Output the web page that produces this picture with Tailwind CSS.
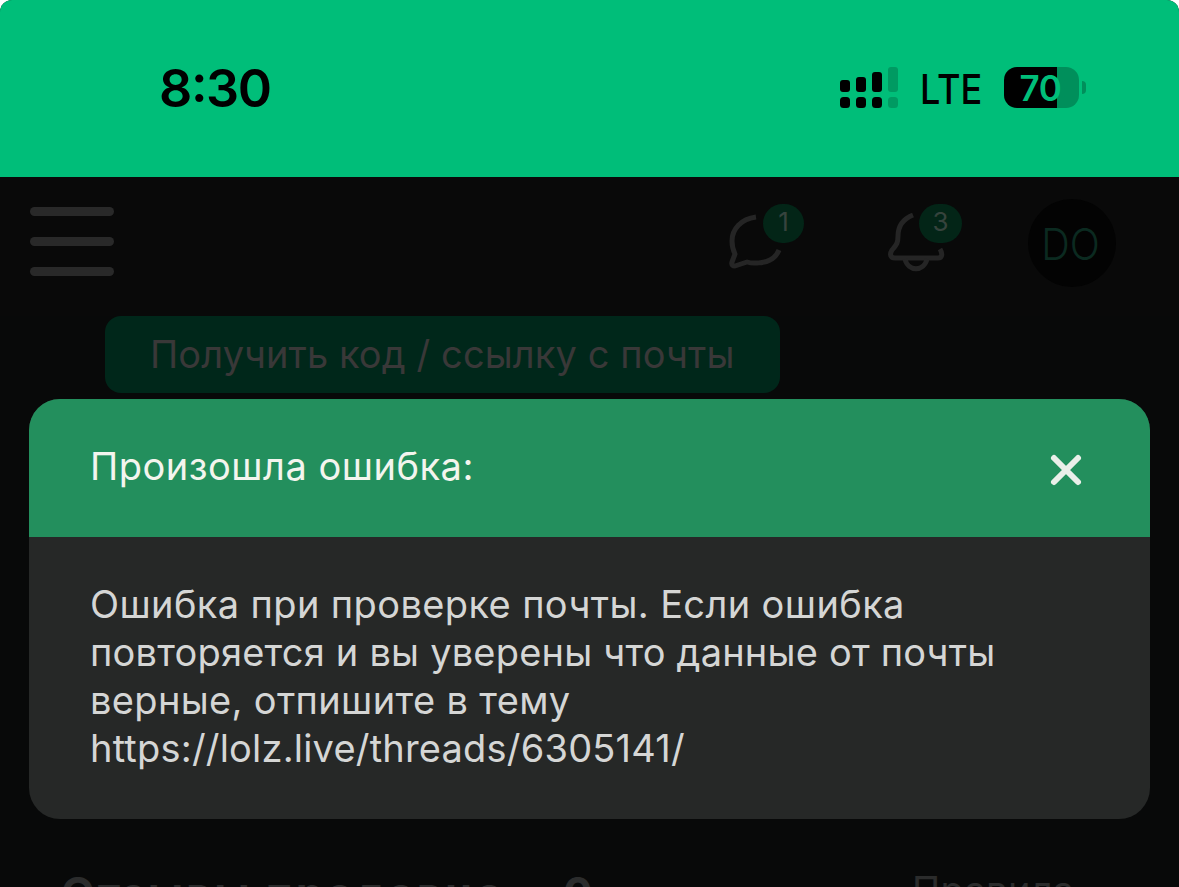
<!DOCTYPE html>
<html lang="ru">
<head>
  <meta charset="UTF-8" />
  <meta name="viewport" content="width=device-width, initial-scale=1.0" />
  <title>Произошла ошибка</title>
  <script src="https://cdn.jsdelivr.net/npm/@tailwindcss/browser@4"></script>
</head>
<body class="bg-white font-['Inter','Noto_Sans',sans-serif]">
  <div class="relative flex h-[887px] w-[1179px] flex-col overflow-hidden rounded-t-[12px] bg-[#080909]">

    <!-- Status bar -->
    <div class="flex h-[177px] shrink-0 items-start justify-between bg-[#00be79] pt-[67px] pr-[93px] pl-[159px] text-black">
      <div class="h-[42px] text-[52px] leading-[44px] font-semibold tracking-[-1.4px] whitespace-nowrap">8<span class="inline-block -translate-y-[5px]">:</span>30</div>
      <div class="flex h-[41px]">
        <svg class="h-[41px] w-[58px] shrink-0" viewBox="0 0 58 41">
          <rect x="0" y="13" width="10" height="12" rx="3" />
          <rect x="16" y="10" width="10" height="15" rx="3" />
          <rect x="32" y="5" width="10" height="20" rx="3" />
          <rect x="48" y="0" width="10" height="25" rx="3" fill="#009a62" />
          <rect x="0" y="30" width="10" height="11" rx="3.5" />
          <rect x="16" y="30" width="10" height="11" rx="3.5" />
          <rect x="32" y="30" width="10" height="11" rx="3.5" />
          <rect x="48" y="30" width="10" height="11" rx="3.5" fill="#009a62" />
        </svg>
        <div class="ml-[22px] w-[84px] text-[41px] leading-[44px] font-medium whitespace-nowrap"><span class="inline-block origin-left scale-x-[0.88]">LTE</span></div>
        <div class="flex h-[41px] w-[75px] shrink-0 items-center justify-center overflow-hidden rounded-[13px] bg-linear-to-r from-black from-[53px] to-[#008f5b] to-[53px] pr-[2px]">
          <span class="pt-px text-[35px] leading-none font-semibold tracking-[-0.3px] text-[#00be79]">70</span>
        </div>
        <div class="mt-[14px] ml-[3px] h-[13px] w-[4px] rounded-r-full bg-[#008f5b]"></div>
      </div>
    </div>

    <!-- Site header -->
    <div class="flex h-[139px] shrink-0 items-start justify-between bg-[#090909] pr-[63px] pl-[30px]">
      <div class="mt-[30px] flex w-[84px] flex-col gap-[21px]">
        <div class="h-[9px] rounded-full bg-[#292929]"></div>
        <div class="h-[9px] rounded-full bg-[#292929]"></div>
        <div class="h-[9px] rounded-full bg-[#292929]"></div>
      </div>
      <div class="flex pt-[23px]">
        <div class="relative w-[158px]">
          <svg class="h-[80px] w-[80px]" viewBox="0 0 80 80" fill="none" stroke="#252525" stroke-width="5" stroke-linejoin="round">
            <path d="M27 17C12 19 3 29 3 41c0 5 1 9 3 13L3 62c-1 3 1 4 3 4l12-4c6 2 18 1 23-2 4-2 7-5 9-10" />
          </svg>
          <div class="absolute top-[4px] left-[34px] h-[39px] w-[41px] rounded-full bg-[#032517] pt-[4px] text-center text-[26px] leading-[28px] text-[#36433d]">1</div>
        </div>
        <div class="relative w-[141px]">
          <svg class="h-[80px] w-[80px]" viewBox="0 0 80 80" fill="none" stroke="#252525" stroke-width="5" stroke-linejoin="round">
            <path d="M26 15c-10 4-15 11-15 21 0 8-2 9-6 14-3 5-1 8 3 8h43c4 0 5-4 2-9" />
            <path d="M18 59c3 13 19 13 22 0" />
          </svg>
          <div class="absolute top-[4px] left-[32px] h-[39px] w-[43px] rounded-full bg-[#032517] pt-[4px] text-center text-[26px] leading-[28px] text-[#36433d]">3</div>
        </div>
        <div class="mt-[-1px] flex h-[88px] w-[88px] items-center justify-center rounded-full bg-[#030303] pt-px pr-[2px] text-[44px] font-light text-[#0b2a20]"><span class="inline-block scale-x-[0.9]">DO</span></div>
      </div>
    </div>

    <!-- Mail code button -->
    <div class="ml-[105px] h-[77px] w-[675px] shrink-0 rounded-[16px] bg-[#00271a] pl-[45px] text-[38px] leading-[76px] tracking-[0.1px] whitespace-nowrap text-[#393838]">Получить код / ссылку с почты</div>

    <!-- Seller reviews -->
    <div class="mt-auto flex h-[12px] shrink-0 pl-[61px] leading-[48px] whitespace-nowrap text-[#2b2c2c]">
      <div class="mt-[-6px] w-[502px] text-[44px] font-bold tracking-[2.85px]">Отзывы продавца</div>
      <div class="mt-[-6px] w-[349px] text-[44px] font-bold">0</div>
      <div class="mt-[-9px] text-[38px] tracking-[0.3px]">Правила</div>
    </div>

    <!-- Error modal -->
    <div class="absolute top-[399px] left-[29px] w-[1121px] overflow-hidden rounded-[31px] bg-[#262827]">
      <div class="flex h-[138px] items-center justify-between bg-[#238f5d] pr-[66px] pl-[61px]">
        <div class="pb-[4px] text-[38px] leading-[48px] tracking-[0.5px] whitespace-nowrap text-[#f3f5ee]">Произошла ошибка:</div>
        <svg class="mt-[4px] h-[36px] w-[36px]" viewBox="0 0 36 36" fill="none" stroke="#eaefe9" stroke-width="6" stroke-linecap="round">
          <path d="M6 6l24 24M30 6L6 30" />
        </svg>
      </div>
      <div class="h-[282px] pt-[43px] pl-[61px] text-[38px] leading-[48px] whitespace-nowrap text-[#d5d6d5]">
        <div class="tracking-[0.38px]">Ошибка при проверке почты. Если ошибка</div>
        <div class="tracking-[0.2px]">повторяется и вы уверены что данные от почты</div>
        <div class="tracking-[0.34px]">верные, отпишите в тему</div>
        <div class="tracking-[0.2px]">https://lolz.live/threads/6305141/</div>
      </div>
    </div>
  </div>
</body>
</html>
